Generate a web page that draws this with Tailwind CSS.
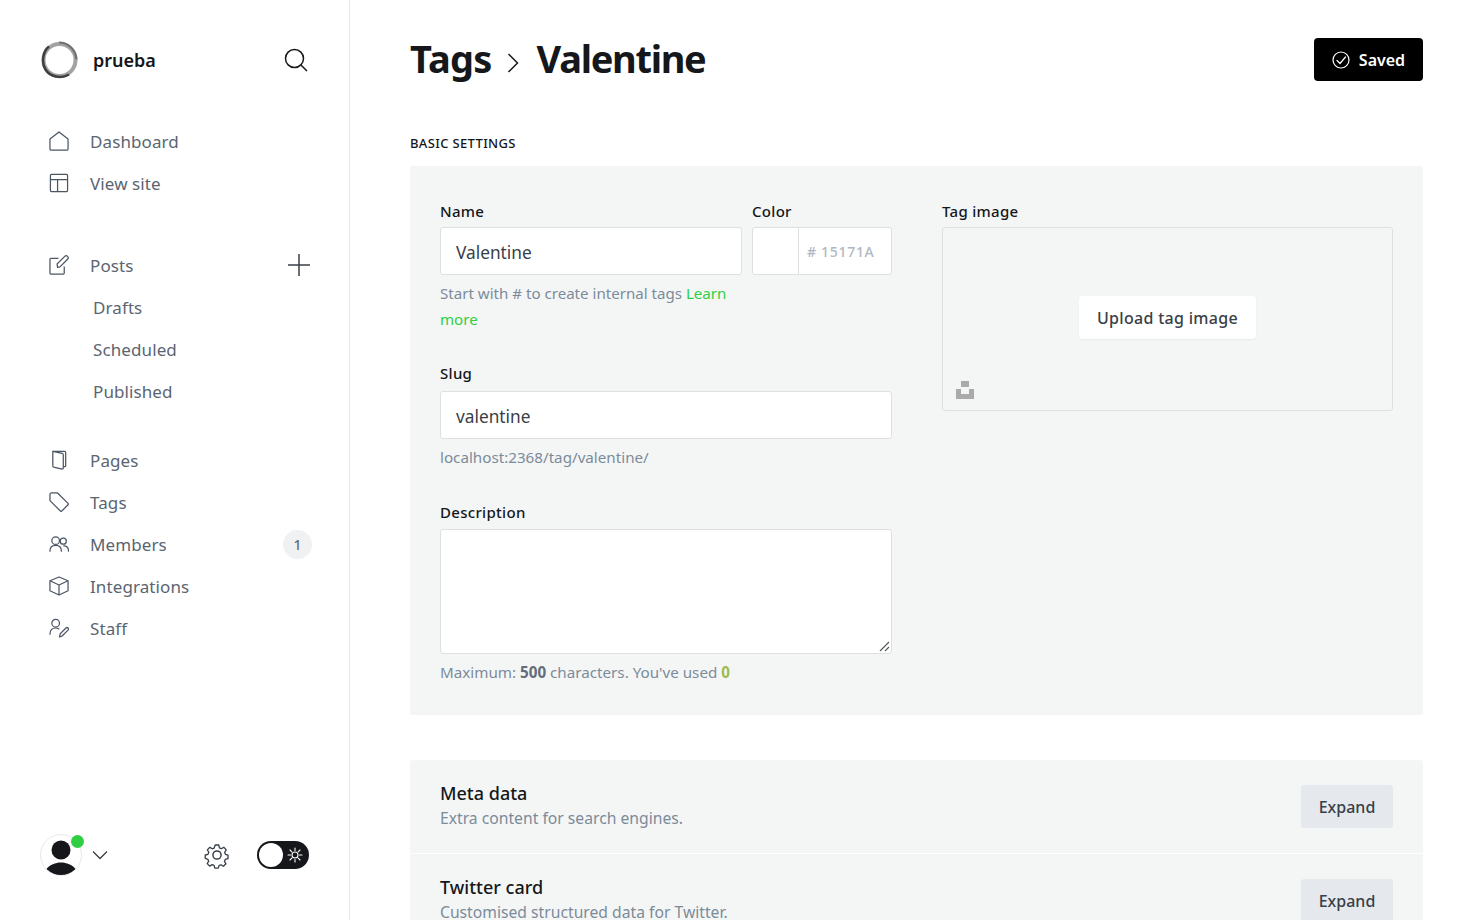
<!DOCTYPE html>
<html lang="en">
<head>
  <meta charset="UTF-8">
  <meta name="viewport" content="width=device-width, initial-scale=1.0">
  <title>Tags - Valentine</title>
  <script src="https://cdn.jsdelivr.net/npm/@tailwindcss/browser@4"></script>
</head>
<body class="bg-white h-[920px] overflow-hidden font-['Noto_Sans',sans-serif] text-[#15171a]">
<div class="flex h-[920px] overflow-hidden">

  <!-- Sidebar -->
  <aside class="w-[350px] shrink-0 border-r border-[#e5e9ed] flex flex-col pl-[40px] pr-[38px] text-[#5a6571] text-[17px] tracking-[0.1px]">
    <div class="flex items-center justify-between h-[40px] mt-[40px]">
      <div class="flex items-center gap-[15px]">
        <svg class="w-[38px] h-[38px]" viewBox="0 0 38 38" fill="none">
          <circle cx="19.500" cy="19" r="16" stroke="#a3a3a3" stroke-width="4"/>
          <path d="M9 5.500C3 10 1 21 5.500 28.500S21 38 29 33.500" stroke="#3f3f3f" stroke-width="2.500"/>
          <path d="M19 1.500c9 0 17 7 17.500 17" stroke="#6f6f6f" stroke-width="2"/>
        </svg>
        <span class="font-semibold text-[18px] tracking-normal text-[#15171a]">prueba</span>
      </div>
      <svg class="w-[24px] h-[24px] mr-[3px]" viewBox="0 0 24 24" fill="none" stroke="#15171a" stroke-width="1.500"><circle cx="10.500" cy="10.500" r="9"/><path d="M17 17l6 6"/></svg>
    </div>

    <!-- Top nav -->
    <nav class="mt-[40px] flex flex-col">
      <a class="flex items-center h-[42px] pl-[9px] gap-[21px]">
        <svg class="w-[20px] h-[20px]" viewBox="0 0 21 21" fill="none" stroke="#4b5563" stroke-width="1.300" stroke-linejoin="round"><path d="M1 8.500L10.500 1 20 8.500V19a1 1 0 0 1-1 1H2a1 1 0 0 1-1-1z"/></svg>
        <span class="pt-[1px]">Dashboard</span>
      </a>
      <a class="flex items-center h-[42px] pl-[9px] gap-[21px]">
        <svg class="w-[20px] h-[20px]" viewBox="0 0 21 21" fill="none" stroke="#4b5563" stroke-width="1.300"><rect x="1.500" y="1.500" width="18" height="18" rx="1"/><path d="M1.500 7h18M9 7v12.500"/></svg>
        <span class="pt-[1px]">View site</span>
      </a>
    </nav>

    <!-- Posts -->
    <nav class="mt-[40px] flex flex-col">
      <a class="flex items-center h-[42px] pl-[9px] gap-[21px]">
        <svg class="w-[20px] h-[20px]" viewBox="0 0 21 21" fill="none" stroke="#4b5563" stroke-width="1.300" stroke-linejoin="round"><path d="M10 3.500H2a1 1 0 0 0-1 1V19a1 1 0 0 0 1 1h13a1 1 0 0 0 1-1v-7"/><path d="M9 13l-.5-3.500L16.500 1.500a2 2 0 0 1 3 3L11.500 12.500z"/></svg>
        <span class="pt-[1px]">Posts</span>
        <svg class="w-[24px] h-[24px] ml-auto" viewBox="0 0 24 24" fill="none" stroke="#394047" stroke-width="1.500"><path d="M12 1v22M1 12h22"/></svg>
      </a>
      <a class="flex items-center h-[42px] pl-[53px] pt-[1px]">Drafts</a>
      <a class="flex items-center h-[42px] pl-[53px] pt-[1px]">Scheduled</a>
      <a class="flex items-center h-[42px] pl-[53px] pt-[1px]">Published</a>
    </nav>

    <!-- Content nav -->
    <nav class="mt-[27px] flex flex-col">
      <a class="flex items-center h-[42px] pl-[9px] gap-[21px]">
        <svg class="w-[20px] h-[20px]" viewBox="0 0 21 21" fill="none" stroke="#4b5563" stroke-width="1.300" stroke-linejoin="round"><path d="M4 1.500h12.500a1 1 0 0 1 1 1v14a1 1 0 0 1-1 1H15"/><path d="M4 1.500l9.800 2a1.500 1.500 0 0 1 1.200 1.500v14a1 1 0 0 1-1.200 1L5 18a1.500 1.500 0 0 1-1-1.500z"/></svg>
        <span class="pt-[1px]">Pages</span>
      </a>
      <a class="flex items-center h-[42px] pl-[9px] gap-[21px]">
        <svg class="w-[20px] h-[20px]" viewBox="0 0 21 21" fill="none" stroke="#4b5563" stroke-width="1.300" stroke-linejoin="round"><path d="M1 2.500A1.500 1.500 0 0 1 2.500 1H9l11 11a1 1 0 0 1 0 1.400L13.400 20a1 1 0 0 1-1.400 0L1 9z"/></svg>
        <span class="pt-[1px]">Tags</span>
      </a>
      <a class="flex items-center h-[42px] pl-[9px] gap-[21px]">
        <svg class="w-[20px] h-[20px]" viewBox="0 0 21 21" fill="none" stroke="#4b5563" stroke-width="1.300" stroke-linecap="round"><circle cx="7" cy="7" r="4"/><path d="M1 18c0-4 2.500-6 6-6s6 2 6 6"/><circle cx="15" cy="7.500" r="3.200"/><path d="M15.500 12.500c3 0 5 2 5 5.500"/></svg>
        <span class="pt-[1px]">Members</span>
        <span class="ml-auto mr-[-1px] mt-[1px] w-[29px] h-[29px] rounded-full bg-[#eff1f3] flex items-center justify-center text-[14px] tracking-normal font-medium text-[#626d79]">1</span>
      </a>
      <a class="flex items-center h-[42px] pl-[9px] gap-[21px]">
        <svg class="w-[20px] h-[20px]" viewBox="0 0 21 21" fill="none" stroke="#4b5563" stroke-width="1.300" stroke-linejoin="round"><path d="M10.500 1L20 5v10.500L10.500 20 1 15.500V5z"/><path d="M1 5l9.500 4.500L20 5M10.500 9.500V20"/></svg>
        <span class="pt-[1px]">Integrations</span>
      </a>
      <a class="flex items-center h-[42px] pl-[9px] gap-[21px]">
        <svg class="w-[20px] h-[20px]" viewBox="0 0 21 21" fill="none" stroke="#4b5563" stroke-width="1.300" stroke-linecap="round" stroke-linejoin="round"><circle cx="7" cy="5.500" r="4"/><path d="M1 17c0-4 2.500-6.500 6-6.500 1.500 0 2.500.3 3.500 1"/><path d="M11 20l.8-3.500 6-6a1.500 1.500 0 0 1 2.200 2.200l-6 6z"/></svg>
        <span class="pt-[1px]">Staff</span>
      </a>
    </nav>

    <!-- Footer of the sidebar -->
    <div class="mt-auto mb-[44px] flex items-center">
      <div class="relative w-[42px] h-[42px]">
        <div class="w-[42px] h-[42px] rounded-full border border-[#e5e9ed] overflow-hidden">
          <svg class="w-[40px] h-[40px]" viewBox="0 0 40 40" fill="#15171a"><circle cx="20" cy="15" r="9.500"/><path d="M5 34.500c4-5 9.500-7 15-7s11 2 15 7c-4 4-9 6-15 6s-11-2-15-6z"/></svg>
        </div>
        <span class="absolute left-[31px] top-[1px] w-[13px] h-[13px] rounded-full bg-[#30cf43]"></span>
      </div>
      <svg class="w-[16px] h-[10px] ml-[10px]" viewBox="0 0 16 10" fill="none" stroke="#394047" stroke-width="1.300"><path d="M1 1.500l7 7 7-7"/></svg>
      <svg class="w-[28px] h-[28px] ml-auto mt-[-1px]" viewBox="0 0 24 24" fill="none" stroke="#394047" stroke-width="1.250" stroke-linejoin="round"><circle cx="12" cy="12" r="3.500"/><path d="M10.300 2.500h3.400l.6 2.700 1.800.8 2.400-1.400 2.300 2.500-1.500 2.300.7 1.900 2.500.9v3.300l-2.600.7-.8 1.800 1.400 2.400-2.400 2.300-2.300-1.400-1.800.7-.8 2.500h-3.300l-.7-2.600-1.800-.7-2.400 1.400-2.300-2.400 1.400-2.300-.8-1.800-2.500-.8v-3.300l2.600-.7.800-1.900-1.400-2.300 2.400-2.400 2.300 1.400 1.800-.7z" transform="translate(1.200 1.200) scale(.9)"/></svg>
      <div class="ml-[26px] mr-[2px] w-[52px] h-[28px] rounded-full bg-[#15171a] flex items-center pl-[2px]">
        <span class="w-[24px] h-[24px] rounded-full bg-white"></span>
        <svg class="w-[16px] h-[16px] ml-[4px]" viewBox="0 0 16 16" fill="none" stroke="#fff" stroke-width="1.100" stroke-linecap="round"><circle cx="8" cy="8" r="3"/><path d="M8 1v2.500M8 12.500V15M1 8h2.500M12.500 8H15M3 3l1.800 1.800M11.200 11.200L13 13M13 3l-1.800 1.800M4.800 11.200L3 13"/></svg>
      </div>
    </div>
  </aside>

  <!-- Main -->
  <main class="flex-1 px-[60px] min-w-0">
    <header class="flex items-center justify-between pt-[38px] h-[81px]">
      <h1 class="flex items-center text-[38px] leading-[43px] font-bold pb-[2px]">
        <span class="tracking-[-0.8px]">Tags</span>
        <svg class="w-[12px] h-[22px] ml-[15px] mr-[18px] mt-[8px]" viewBox="0 0 12 22" fill="none" stroke="#15171a" stroke-width="1.500"><path d="M1.500 2l9 9-9 9"/></svg>
        <span class="tracking-[-1.3px]">Valentine</span>
      </h1>
      <button class="bg-black text-white rounded-[4px] w-[109px] h-[43px] text-[16px] font-semibold flex items-center justify-center gap-[9px]">
        <svg class="w-[18px] h-[18px]" viewBox="0 0 18 18" fill="none" stroke="#fff" stroke-width="1.200" stroke-linecap="round" stroke-linejoin="round"><circle cx="9" cy="9" r="8"/><path d="M5 9.500l3 3 5.500-6.500"/></svg>
        <span>Saved</span>
      </button>
    </header>

    <h4 class="mt-[53px] text-[13px] leading-[18px] font-medium tracking-[0.35px] text-[#15171a]">BASIC SETTINGS</h4>

    <!-- Basic settings panel -->
    <section class="mt-[14px] bg-[#f4f6f6] rounded-[3px] h-[549px] p-[30px] grid grid-cols-[452px_451px] gap-x-[50px] content-start">
      <div>
        <div class="flex gap-[10px]">
          <div class="w-[302px]">
            <label class="block text-[15px] leading-[31px] font-medium tracking-[0.3px]">Name</label>
            <div class="h-[48px] bg-white border border-[#dddfe1] rounded-[3px] flex items-center px-[15px] pt-[3px] text-[17.3px] text-[#394047]">Valentine</div>
          </div>
          <div class="w-[140px]">
            <label class="block text-[15px] leading-[31px] font-medium tracking-[0.3px]">Color</label>
            <div class="h-[48px] bg-white border border-[#dddfe1] rounded-[3px] flex items-center">
              <span class="w-[46px] h-full border-r border-[#dddfe1]"></span>
              <span class="pl-[8px] text-[14px] font-medium tracking-[0.7px] text-[#aeb7c1]"># 15171A</span>
            </div>
          </div>
        </div>
        <p class="w-[300px] mt-[5px] text-[15.1px] leading-[26px] text-[#7c8b9a]">Start with # to create internal tags <a class="text-[#30cf43]">Learn more</a></p>

        <label class="block mt-[23px] text-[15px] leading-[36px] font-medium tracking-[0.3px]">Slug</label>
        <div class="h-[48px] bg-white border border-[#dddfe1] rounded-[3px] flex items-center px-[15px] pt-[3px] text-[17.3px] text-[#394047]">valentine</div>
        <p class="mt-[5px] text-[15.2px] leading-[26px] text-[#7c8b9a]">localhost:2368/tag/valentine/</p>

        <label class="block mt-[25px] text-[15px] leading-[34px] font-medium tracking-[0.3px]">Description</label>
        <div class="relative h-[125px] bg-white border border-[#dddfe1] rounded-[3px]">
          <svg class="absolute right-[1px] bottom-[1px] w-[11px] h-[11px]" viewBox="0 0 11 11" fill="none" stroke="#555" stroke-width="1.100"><path d="M1 10l9-9M6 10l4-4"/></svg>
        </div>
        <p class="mt-[5px] text-[15.2px] leading-[26px] text-[#7c8b9a]">Maximum: <b class="font-bold text-[#626d79]">500</b> characters. You've used <b class="font-bold text-[#9bbb50]">0</b></p>
      </div>

      <div>
        <label class="block text-[15px] leading-[31px] font-medium tracking-[0.3px]">Tag image</label>
        <div class="relative h-[184px] border border-[#dddfe1] rounded-[3px] flex justify-center pt-[68px]">
          <button class="w-[177px] h-[43px] bg-white rounded-[4px] text-[16px] font-medium tracking-[0.3px] text-[#394047] shadow-[0_1px_2px_rgba(0,0,0,0.05)]">Upload tag image</button>
          <svg class="absolute left-[12px] bottom-[11px] w-[20px] h-[18px]" viewBox="0 0 20 18" fill="#aaa"><path d="M6 0h8v6H6z"/><path d="M1 8h5v5h8V8h5v10H1z"/></svg>
        </div>
      </div>
    </section>

    <!-- Expandable panels -->
    <section class="mt-[45px] bg-[#f4f6f6] rounded-[3px]">
      <div class="h-[94px] px-[30px] flex items-center justify-between border-b border-white">
        <div class="pb-[3px]">
          <h3 class="text-[18px] leading-[26px] font-medium">Meta data</h3>
          <p class="text-[15.7px] leading-[24px] text-[#7c8b9a]">Extra content for search engines.</p>
        </div>
        <button class="w-[92px] h-[43px] bg-[#e5e9ed] rounded-[3px] text-[16px] font-medium text-[#394047]">Expand</button>
      </div>
      <div class="h-[93px] px-[30px] flex items-center justify-between">
        <div class="pb-[3px]">
          <h3 class="text-[18px] leading-[26px] font-medium">Twitter card</h3>
          <p class="text-[15.7px] leading-[24px] text-[#7c8b9a]">Customised structured data for Twitter.</p>
        </div>
        <button class="w-[92px] h-[43px] bg-[#e5e9ed] rounded-[3px] text-[16px] font-medium text-[#394047]">Expand</button>
      </div>
    </section>
  </main>

</div>
</body>
</html>
